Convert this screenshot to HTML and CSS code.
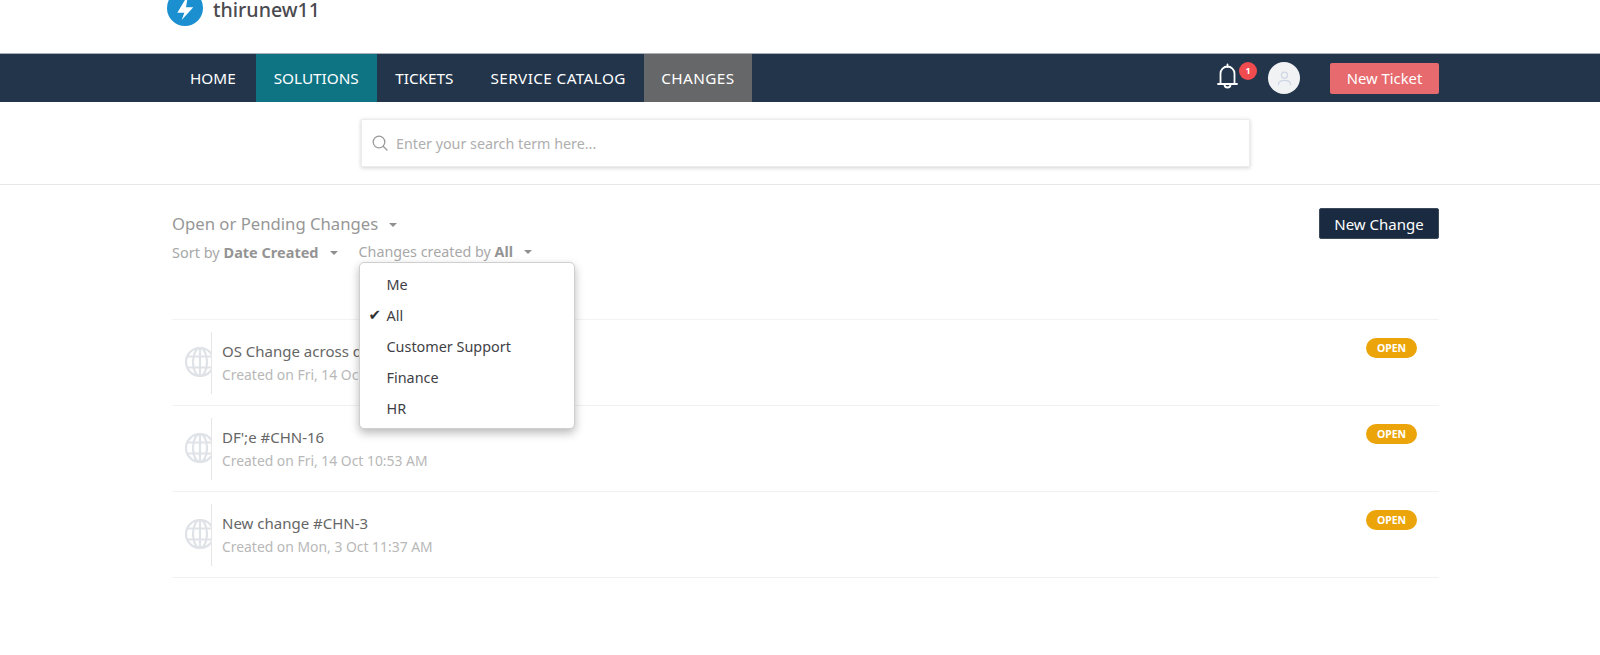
FILE: index.html
```html
<!DOCTYPE html>
<html lang="en">
<head>
<meta charset="utf-8">
<title>Changes</title>
<link rel="stylesheet" href="styles.css">
</head>
<body>
<header class="brand">
  <svg class="logo" viewBox="0 0 36 36"><circle cx="18" cy="18" r="18" fill="#1b8fd0"/><path d="M21 5 L10.300 22.700 H17.300 L14.700 30 L26.300 17.300 H19 Z" fill="#fff"/></svg>
  <span class="brand-name">thirunew11</span>
</header>
<nav class="nav">
  <a class="nav-item nav-home">HOME</a>
  <a class="nav-item nav-solutions">SOLUTIONS</a>
  <a class="nav-item nav-tickets">TICKETS</a>
  <a class="nav-item nav-wide nav-catalog">SERVICE CATALOG</a>
  <a class="nav-item nav-wide nav-changes">CHANGES</a>
  <div class="nav-right">
    <div class="bell">
      <svg class="bell-icon" viewBox="0 0 21 26"><path d="M10.500 1.500v2.500M3.500 21V10.500a7 7 0 0 1 14 0V21M1 21h19M7.500 21.500a3 3 0 0 0 6 0" fill="none" stroke="#fff" stroke-width="1.800" stroke-linecap="round"/></svg>
      <span class="badge">1</span>
    </div>
    <div class="avatar"><svg viewBox="0 0 20 20"><circle cx="10" cy="6.500" r="3.200" fill="none" stroke="#cfd6e4" stroke-width="1.300"/><path d="M3.500 17c0-3.500 3-5 6.500-5s6.500 1.500 6.500 5" fill="none" stroke="#cfd6e4" stroke-width="1.300"/></svg></div>
    <button class="new-ticket">New Ticket</button>
  </div>
</nav>
<section class="search-band">
  <div class="search">
    <svg class="search-icon" viewBox="0 0 16 16"><circle cx="7" cy="7" r="5.800" fill="none" stroke="#9a9a9a" stroke-width="1.300"/><path d="M11.200 11.200 15 15" stroke="#9a9a9a" stroke-width="1.300" stroke-linecap="round"/></svg>
    <span class="placeholder">Enter your search term here...</span>
  </div>
</section>
<main class="content">
  <div class="toolbar">
    <div class="filters">
      <div class="filter-title">Open or Pending Changes<i class="caret caret-title"></i></div>
      <div class="filter-row">
        <span class="filter-sort">Sort by <b>Date Created</b><i class="caret"></i></span>
        <div class="filter-by">
          <span>Changes created by <b>All</b><i class="caret"></i></span>
          <ul class="menu">
            <li>Me</li>
            <li class="checked">All</li>
            <li>Customer Support</li>
            <li>Finance</li>
            <li>HR</li>
          </ul>
        </div>
      </div>
    </div>
    <button class="new-change">New Change</button>
  </div>
  <ul class="rows">
    <li class="row">
      <svg class="globe" viewBox="0 0 26 30"><g fill="none" stroke="#dfe3e8" stroke-width="2.200"><circle cx="15" cy="15" r="14"/><ellipse cx="15" cy="15" rx="7" ry="14"/><path d="M15 1v28M2.500 9.500h25M2.500 20.500h25"/></g></svg>
      <div class="row-text"><div class="row-title">OS Change across d</div><div class="row-meta">Created on Fri, 14 Oc</div></div>
      <span class="status">OPEN</span>
    </li>
    <li class="row">
      <svg class="globe" viewBox="0 0 26 30"><g fill="none" stroke="#dfe3e8" stroke-width="2.200"><circle cx="15" cy="15" r="14"/><ellipse cx="15" cy="15" rx="7" ry="14"/><path d="M15 1v28M2.500 9.500h25M2.500 20.500h25"/></g></svg>
      <div class="row-text"><div class="row-title">DF';e #CHN-16</div><div class="row-meta">Created on Fri, 14 Oct 10:53 AM</div></div>
      <span class="status">OPEN</span>
    </li>
    <li class="row">
      <svg class="globe" viewBox="0 0 26 30"><g fill="none" stroke="#dfe3e8" stroke-width="2.200"><circle cx="15" cy="15" r="14"/><ellipse cx="15" cy="15" rx="7" ry="14"/><path d="M15 1v28M2.500 9.500h25M2.500 20.500h25"/></g></svg>
      <div class="row-text"><div class="row-title">New change #CHN-3</div><div class="row-meta">Created on Mon, 3 Oct 11:37 AM</div></div>
      <span class="status">OPEN</span>
    </li>
  </ul>
</main>
</body>
</html>
```
FILE: styles.css
```css
* { box-sizing: border-box; }
html, body { margin: 0; padding: 0; }
body { background: #fff; font-family: "Noto Sans", "Open Sans", sans-serif; font-size: 14px; color: #555; height: 655px; overflow: hidden; }
ul { list-style: none; margin: 0; padding: 0; }
button { font-family: inherit; cursor: pointer; }

.brand { height: 53px; padding-left: 167px; display: flex; align-items: flex-start; overflow: hidden; }
.logo { width: 36px; height: 36px; margin-top: -10px; flex: none; }
.brand-name { margin-left: 10px; margin-top: 0; font-size: 19.600px; line-height: 20px; font-weight: 500; color: #4a4a4f; }

.nav { height: 49px; background: #22354b; border-top: 1px solid #a9b0b8; padding-left: 172px; padding-right: 161px; display: flex; align-items: stretch; }
.nav-item { display: flex; align-items: center; padding: 0 18px; color: #fff; font-size: 15.300px; }
.nav-home { padding: 0 20px 0 18px; }
.nav-wide { letter-spacing: .4px; }
.nav-solutions { background: #0e7484; padding: 0 18px; }
.nav-tickets { padding: 0 18.500px; }
.nav-catalog { padding: 0 18.500px; }
.nav-changes { background: #666769; padding: 0 17px; }
.nav-right { margin-left: auto; display: flex; align-items: center; }
.bell { position: relative; width: 21px; height: 26px; margin-right: 30px; margin-top: -5px; }
.bell-icon { width: 21px; height: 26px; display: block; }
.badge { position: absolute; left: 22px; top: -1px; width: 18px; height: 18px; border-radius: 50%; background: #f04b4f; color: #fff; font-size: 9px; font-weight: 700; line-height: 18px; text-align: center; }
.avatar { width: 32px; height: 32px; border-radius: 50%; background: #f1f2f4; display: flex; align-items: center; justify-content: center; }
.avatar svg { width: 19px; height: 19px; }
.new-ticket { margin-left: 30px; width: 109px; height: 31px; border: 0; border-radius: 2px; background: #e76b6e; color: #fff; font-size: 14.800px; padding: 0; }

.search-band { height: 83px; border-bottom: 1px solid #e8e8e8; padding: 17px 0 0 361px; }
.search { width: 889px; height: 48px; background: #fff; border: 1px solid #ececec; box-shadow: 0 1px 4px rgba(0,0,0,.18); display: flex; align-items: center; padding-left: 10px; }
.search-icon { width: 16px; height: 16px; margin-right: 8px; }
.placeholder { color: #aeaeae; font-size: 14.300px; }

.content { padding: 0 161px 0 172px; }
.toolbar { display: flex; justify-content: space-between; align-items: flex-start; height: 135px; padding-top: 23px; border-bottom: 1px solid #f3f3f3; }
.filters { margin-top: 5px; }
.filter-title { font-size: 16.700px; line-height: 22px; color: #979797; }
.filter-row { display: flex; margin-top: 7px; font-size: 14.300px; line-height: 20px; color: #a8a8a8; }
.filter-row b { color: #949494; font-weight: 700; }
.filter-sort { font-size: 14.500px; }
.filter-by { position: relative; margin-left: 21px; }
.caret { display: inline-block; width: 0; height: 0; border-left: 4.500px solid transparent; border-right: 4.500px solid transparent; border-top: 4.500px solid #8f8f8f; margin-left: 11px; vertical-align: 3px; }
.new-change { width: 120px; height: 31px; background: #1a2a40; color: #fff; border: 1px solid #3c4a5c; border-radius: 2px; font-size: 15px; padding: 0; }

.menu { position: absolute; z-index: 5; left: 0; top: 20px; width: 216px; height: 167px; background: #fff; border: 1px solid #cfcfcf; border-radius: 5px; box-shadow: 0 4px 10px rgba(0,0,0,.28); padding: 5.500px 0 0 0; }
.menu li { position: relative; height: 31.200px; line-height: 31.200px; padding-left: 27px; color: #3f3f46; font-size: 14.400px; white-space: nowrap; }
.menu .checked::before { content: "✔"; position: absolute; left: 9px; font-family: "DejaVu Sans", sans-serif; font-size: 15px; color: #333; }

.row { height: 86px; border-bottom: 1px solid #f1f1f1; display: flex; align-items: flex-start; padding-top: 12px; }
.globe { width: 26px; height: 30px; flex: none; margin-left: 13px; margin-top: 15px; }
.row-text { height: 62px; padding-left: 10px; border-left: 1px solid #e6e6e6; flex: 1; padding-top: 8px; }
.row-title { font-size: 15px; line-height: 22px; color: #666; white-space: nowrap; }
.row-meta { font-size: 13.900px; line-height: 22px; margin-top: 2px; color: #b8b8b8; white-space: nowrap; }
.status { width: 51px; height: 20px; margin-top: 6px; margin-right: 22px; border-radius: 10px; background: #eba50a; color: #fff; font-size: 10.500px; font-weight: 700; line-height: 20px; text-align: center; }
```
